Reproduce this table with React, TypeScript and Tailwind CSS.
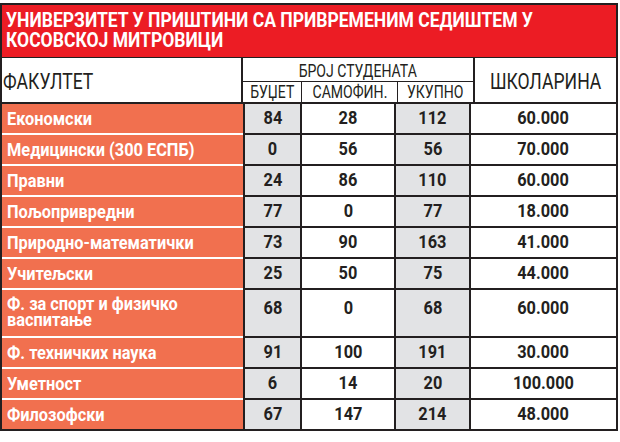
import React from "react";

const rows: { name: string[]; b: string; s: string; u: string; k: string; tall?: boolean }[] = [
  { name: ["Економски"], b: "84", s: "28", u: "112", k: "60.000" },
  { name: ["Медицински (300 ЕСПБ)"], b: "0", s: "56", u: "56", k: "70.000" },
  { name: ["Правни"], b: "24", s: "86", u: "110", k: "60.000" },
  { name: ["Пољопривредни"], b: "77", s: "0", u: "77", k: "18.000" },
  { name: ["Природно-математички"], b: "73", s: "90", u: "163", k: "41.000" },
  { name: ["Учитељски"], b: "25", s: "50", u: "75", k: "44.000" },
  { name: ["Ф. за спорт и физичко", "васпитање"], b: "68", s: "0", u: "68", k: "60.000", tall: true },
  { name: ["Ф. техничких наука"], b: "91", s: "100", u: "191", k: "30.000" },
  { name: ["Уметност"], b: "6", s: "14", u: "20", k: "100.000" },
  { name: ["Филозофски"], b: "67", s: "147", u: "214", k: "48.000" },
];

const FONT = { fontFamily: 'Roboto, "Liberation Sans", sans-serif' };

function L({ children }: { children: React.ReactNode }) {
  return <span className="inline-block whitespace-nowrap origin-left scale-x-[0.86]">{children}</span>;
}
function C({ children, s = "scale-x-[0.86]" }: { children: React.ReactNode; s?: string }) {
  return <span className={`inline-block whitespace-nowrap origin-center ${s}`}>{children}</span>;
}

export default function App() {
  return (
    <div className="w-[620px] h-[442px] bg-white pt-[3px]" style={FONT}>
      <div className="w-[618px] border-2 border-[#231f20]">
        <div className="h-[53px] bg-[#ec1c24] border-b border-[#231f20] pl-[4px] pt-[5px] text-white font-bold text-[21px] leading-[20px]">
          <div><span className="inline-block whitespace-nowrap origin-left scale-x-[0.835]">УНИВЕРЗИТЕТ У ПРИШТИНИ СА ПРИВРЕМЕНИМ СЕДИШТЕМ У</span></div>
          <div><span className="inline-block whitespace-nowrap origin-left scale-x-[0.835]">КОСОВСКОЈ МИТРОВИЦИ</span></div>
        </div>
        <div className="flex h-[46px] border-b-2 border-[#231f20] text-[#231f20]">
          <div className="w-[241px] border-r-2 border-[#231f20] flex items-center pl-[1px] text-[22px] pt-[2px]">
            <span className="inline-block whitespace-nowrap origin-left scale-x-[0.8]">ФАКУЛТЕТ</span>
          </div>
          <div className="w-[232px] border-r-2 border-[#231f20] flex flex-col">
            <div className="h-[24px] border-b border-[#231f20] flex items-center justify-center text-[18px] pt-[1px]">
              <C s="scale-x-[0.78]">БРОЈ СТУДЕНАТА</C>
            </div>
            <div className="flex flex-1 text-[18px]">
              <div className="w-[59px] border-r border-[#231f20] flex items-end justify-center leading-[20px]"><C s="scale-x-[0.78]">БУЏЕТ</C></div>
              <div className="w-[96px] border-r border-[#231f20] flex items-end justify-center leading-[20px]"><C s="scale-x-[0.78]">САМОФИН.</C></div>
              <div className="flex-1 flex items-end justify-center leading-[20px]"><C s="scale-x-[0.78]">УКУПНО</C></div>
            </div>
          </div>
          <div className="flex-1 flex items-center justify-center text-[22px] pt-[2px]">
            <C s="scale-x-[0.8]">ШКОЛАРИНА</C>
          </div>
        </div>
        {rows.map((r, i) => {
          const last = i === rows.length - 1;
          const h = r.tall ? "h-[48px]" : last ? "h-[29px]" : "h-[31px]";
          const bd = last ? "" : "border-b-2";
          const num = `${bd} border-[#231f20] font-bold text-[19px] text-[#231f20] flex justify-center ${
            r.tall ? "items-start pt-[4px]" : "items-center"
          }`;
          return (
            <div key={i} className={`flex ${h}`}>
              <div
                className={`w-[241px] bg-[#f1704f] ${bd} border-white text-white font-bold text-[19px] pl-[5px] flex flex-col justify-center ${
                  r.tall ? "leading-[16px] pb-[3px]" : "leading-[22px]"
                }`}
              >
                {r.name.map((n, j) => (
                  <div key={j}>
                    <L>{n}</L>
                  </div>
                ))}
              </div>
              <div className="w-[2px] bg-[#231f20]" />
              <div className={`w-[57px] bg-[#e2e3e5] border-r-2 ${num}`}>
                <C>{r.b}</C>
              </div>
              <div className={`w-[94px] bg-white border-r-2 ${num}`}>
                <C>{r.s}</C>
              </div>
              <div className={`w-[75px] bg-[#e2e3e5] border-r-2 ${num}`}>
                <C>{r.u}</C>
              </div>
              <div className={`flex-1 bg-white ${num}`}>
                <C>{r.k}</C>
              </div>
            </div>
          );
        })}
      </div>
    </div>
  );
}
